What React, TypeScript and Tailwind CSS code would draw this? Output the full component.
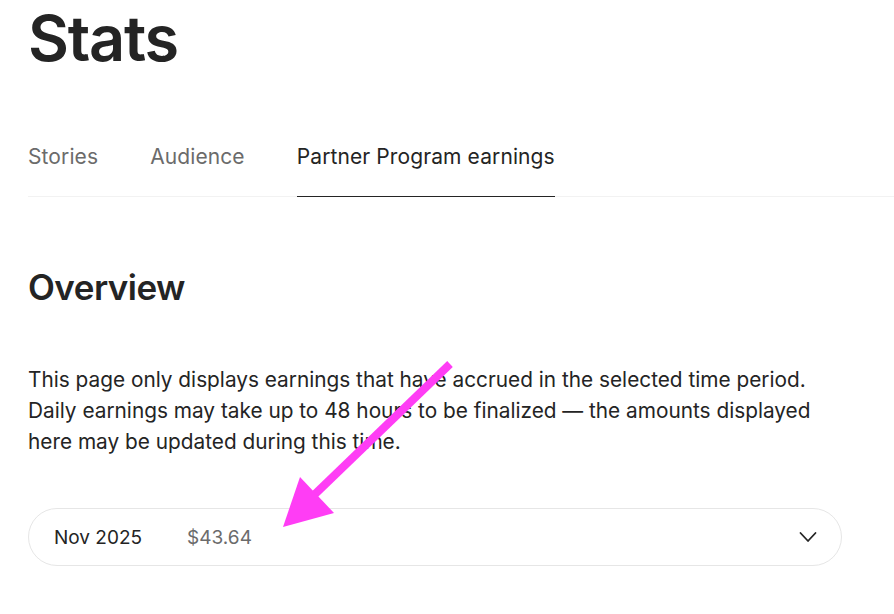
import React from 'react';

const tabs = [
  { label: 'Stories', active: false },
  { label: 'Audience', active: false },
  { label: 'Partner Program earnings', active: true },
];

export default function App() {
  return (
    <div className="relative min-h-screen overflow-hidden bg-white pl-7 font-['Inter','Noto_Sans',sans-serif] text-[#242424]">
      <h1 className="text-[63px] font-semibold leading-[76px] tracking-[-0.02em]">Stats</h1>

      {/* Tabs */}
      <div className="mt-[67px] flex gap-[52px] border-b border-[#f2f2f2]">
        {tabs.map(tab => (
          <button
            key={tab.label}
            className={`-mb-px pb-[25px] text-[21px] leading-[28px] tracking-[0.005em] ${
              tab.active ? 'border-b border-[#242424] text-[#242424]' : 'border-b border-transparent text-[#6b6b6b]'
            }`}
          >
            {tab.label}
          </button>
        ))}
      </div>

      <h2 className="mt-[68px] text-[35px] font-semibold leading-[44px] tracking-[-0.015em]">Overview</h2>

      <p className="mt-[55px] max-w-[820px] text-[20.8px] leading-[31px]">
        This page only displays earnings that have accrued in the selected time period.
        <br />
        Daily earnings may take up to 48 hours to be finalized — the amounts displayed
        <br />
        here may be updated during this time.
      </p>

      {/* Month selector */}
      <div className="mt-[51px] flex h-[58px] w-[814px] items-center rounded-full border border-[#e6e6e6] pl-[25px] pr-6 pt-[3px]">
        <span className="text-[19px]">Nov 2025</span>
        <span className="ml-[45px] text-[19px] text-[#6b6b6b]">$43.64</span>
        <svg className="ml-auto -mt-[3px]" width="18" height="12" viewBox="0 0 18 12" fill="none">
          <path d="M1.5 2 L9 10 L16.5 2" stroke="#242424" strokeWidth="1.8" strokeLinecap="round" strokeLinejoin="round" />
        </svg>
      </div>

      {/* Annotation arrow */}
      <svg className="pointer-events-none absolute left-0 top-0" width="894" height="614" viewBox="0 0 894 614">
        <line x1="450" y1="364" x2="312" y2="497" stroke="#ff3df5" strokeWidth="8" strokeLinecap="butt" />
        <polygon points="283,527 300,477 334,513" fill="#ff3df5" />
      </svg>
    </div>
  );
}
